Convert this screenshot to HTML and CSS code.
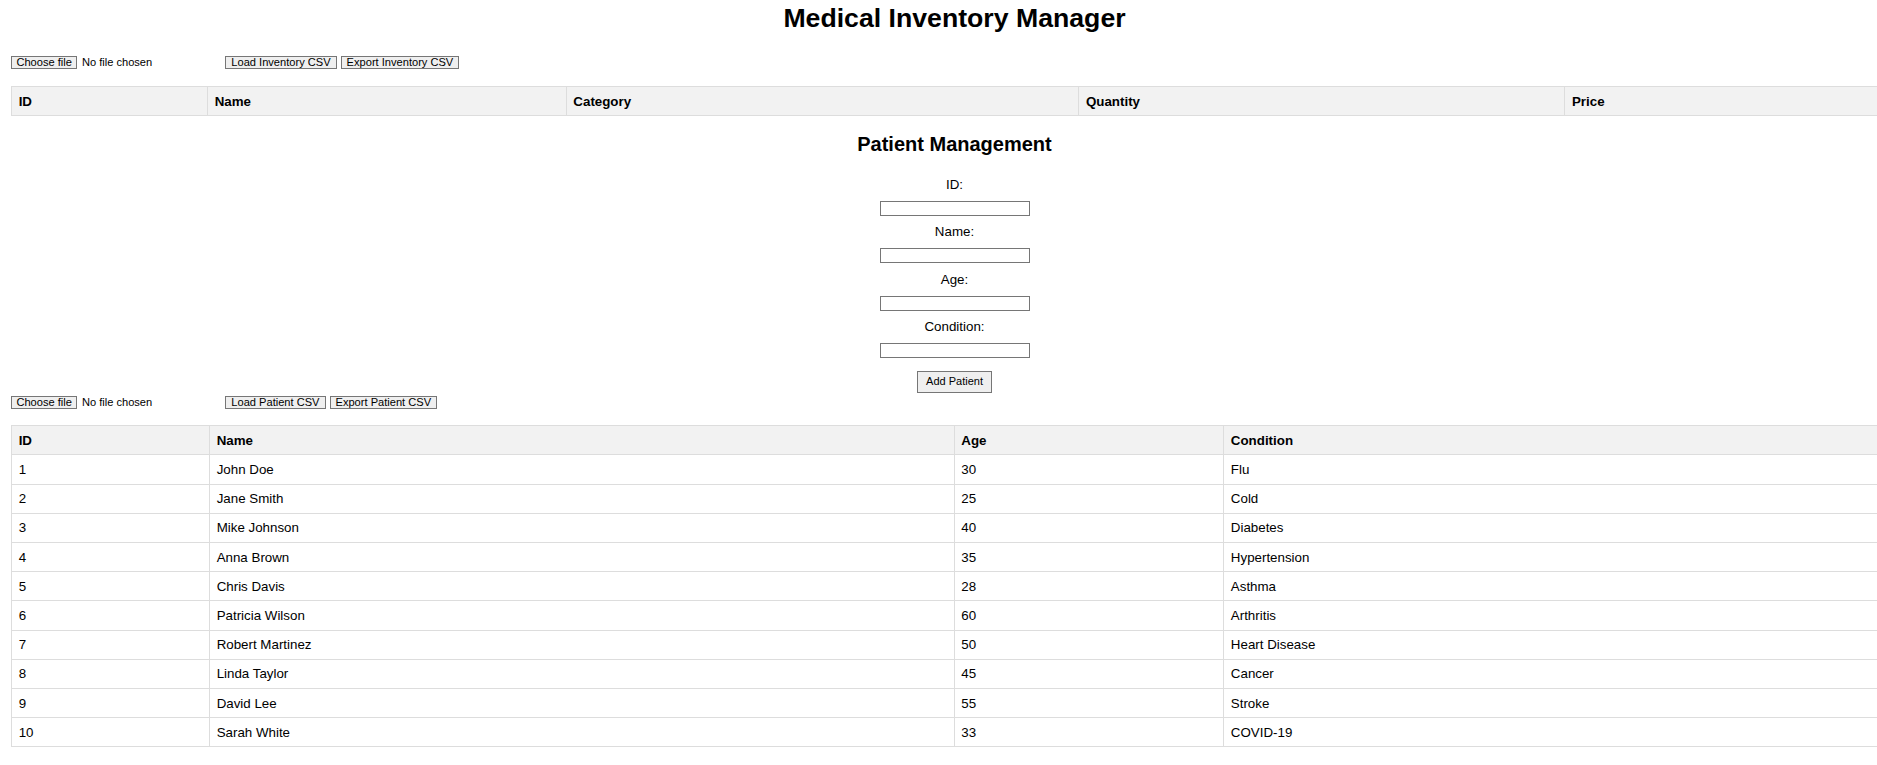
FILE: index.html
```html
<!DOCTYPE html>
<html lang="en">
<head>
<meta charset="utf-8">
<title>Medical Inventory Manager</title>
<link rel="stylesheet" href="styles.css">
</head>
<body>
<div class="page">
  <h1 class="title">Medical Inventory Manager</h1>

  <div class="controls">
    <span class="file"><span class="file-btn">Choose file</span><span class="file-text">No file chosen</span></span>
    <button class="btn" type="button">Load Inventory CSV</button>
    <button class="btn" type="button">Export Inventory CSV</button>
  </div>

  <table class="grid inv">
    <colgroup>
      <col class="inv-id"><col class="inv-name"><col class="inv-cat"><col class="inv-qty"><col class="inv-price">
    </colgroup>
    <thead>
      <tr><th>ID</th><th>Name</th><th>Category</th><th>Quantity</th><th>Price</th></tr>
    </thead>
    <tbody></tbody>
  </table>

  <h2 class="subtitle">Patient Management</h2>

  <form class="patient-form">
    <label class="lbl" for="pid">ID:</label>
    <input class="field" id="pid" type="text">
    <label class="lbl" for="pname">Name:</label>
    <input class="field" id="pname" type="text">
    <label class="lbl" for="page">Age:</label>
    <input class="field" id="page" type="text">
    <label class="lbl" for="pcond">Condition:</label>
    <input class="field" id="pcond" type="text">
    <button class="add-btn" type="button">Add Patient</button>
  </form>

  <div class="controls controls-patient">
    <span class="file"><span class="file-btn">Choose file</span><span class="file-text">No file chosen</span></span>
    <button class="btn" type="button">Load Patient CSV</button>
    <button class="btn" type="button">Export Patient CSV</button>
  </div>

  <table class="grid pat">
    <colgroup>
      <col class="pat-id"><col class="pat-name"><col class="pat-age"><col class="pat-cond">
    </colgroup>
    <thead>
      <tr><th>ID</th><th>Name</th><th>Age</th><th>Condition</th></tr>
    </thead>
    <tbody>
      <tr><td>1</td><td>John Doe</td><td>30</td><td>Flu</td></tr>
      <tr><td>2</td><td>Jane Smith</td><td>25</td><td>Cold</td></tr>
      <tr><td>3</td><td>Mike Johnson</td><td>40</td><td>Diabetes</td></tr>
      <tr><td>4</td><td>Anna Brown</td><td>35</td><td>Hypertension</td></tr>
      <tr><td>5</td><td>Chris Davis</td><td>28</td><td>Asthma</td></tr>
      <tr><td>6</td><td>Patricia Wilson</td><td>60</td><td>Arthritis</td></tr>
      <tr><td>7</td><td>Robert Martinez</td><td>50</td><td>Heart Disease</td></tr>
      <tr><td>8</td><td>Linda Taylor</td><td>45</td><td>Cancer</td></tr>
      <tr><td>9</td><td>David Lee</td><td>55</td><td>Stroke</td></tr>
      <tr><td>10</td><td>Sarah White</td><td>33</td><td>COVID-19</td></tr>
    </tbody>
  </table>
</div>
</body>
</html>
```

FILE: styles.css
```css
html {
  overflow: hidden;
  background: #fff;
}

body {
  margin: 0;
  font-family: "Liberation Sans", Arial, sans-serif;
  font-size: 13.33px;
  color: #000;
}

.page {
  width: 1887px;
  padding-left: 11px;
  box-sizing: content-box;
}

.title {
  margin: 3px 0 0;
  font-size: 26.67px;
  line-height: 31px;
  font-weight: bold;
  text-align: center;
}

.controls {
  display: flex;
  align-items: center;
  height: 13px;
  margin-top: 22px;
  font-size: 11.1px;
}

.controls-patient {
  margin-top: 2.8px;
}

.file {
  display: flex;
  align-items: center;
  width: 214.3px;
  flex: none;
  white-space: nowrap;
}

.file-btn {
  box-sizing: border-box;
  height: 13px;
  line-height: 11px;
  padding: 0 4.4px;
  border: 1px solid #767676;
  background: #efefef;
  margin-right: 4.6px;
}

.file-text {
  line-height: 13px;
}

.btn {
  box-sizing: border-box;
  height: 13px;
  line-height: 11px;
  padding: 0 5px;
  margin: 0 4px 0 0;
  border: 1px solid #767676;
  border-radius: 0;
  background: #efefef;
  font-family: "Liberation Sans", Arial, sans-serif;
  font-size: 11.1px;
  color: #000;
  white-space: nowrap;
}

.grid {
  width: 100%;
  table-layout: fixed;
  border-collapse: collapse;
}

.grid th,
.grid td {
  border: 1px solid #ddd;
  padding: 6.6px 6.67px;
  line-height: 15px;
  text-align: left;
  font-size: 13.33px;
  white-space: nowrap;
  overflow: hidden;
}

.grid th {
  background: #f2f2f2;
  font-weight: bold;
}

.inv {
  margin-top: 17px;
}

.inv-id { width: 196px; }
.inv-name { width: 358.7px; }
.inv-cat { width: 512.6px; }
.inv-qty { width: 486px; }
.inv-price { width: auto; }

.pat {
  margin-top: 16.6px;
}

.pat-id { width: 198px; }
.pat-name { width: 744.7px; }
.pat-age { width: 269.5px; }
.pat-cond { width: auto; }

.subtitle {
  margin: 17.3px 0 0;
  font-size: 20px;
  line-height: 23px;
  font-weight: bold;
  text-align: center;
}

.patient-form {
  display: flex;
  flex-direction: column;
  align-items: center;
  gap: 8.5px;
  margin: 20.6px 0 0;
}

.lbl {
  display: block;
  line-height: 15.33px;
  font-size: 13.33px;
}

.field {
  box-sizing: border-box;
  width: 150px;
  height: 15px;
  margin: 0;
  padding: 0 2px;
  border: 1px solid #767676;
  border-radius: 0;
  background: #fff;
  font-family: "Liberation Sans", Arial, sans-serif;
  font-size: 11.1px;
}

.add-btn {
  box-sizing: border-box;
  height: 22.3px;
  margin: 4.2px 0 0;
  padding: 0 8.5px;
  border: 1px solid #767676;
  border-radius: 0;
  background: #efefef;
  font-family: "Liberation Sans", Arial, sans-serif;
  font-size: 11px;
  line-height: 12.7px;
  color: #000;
}
```
